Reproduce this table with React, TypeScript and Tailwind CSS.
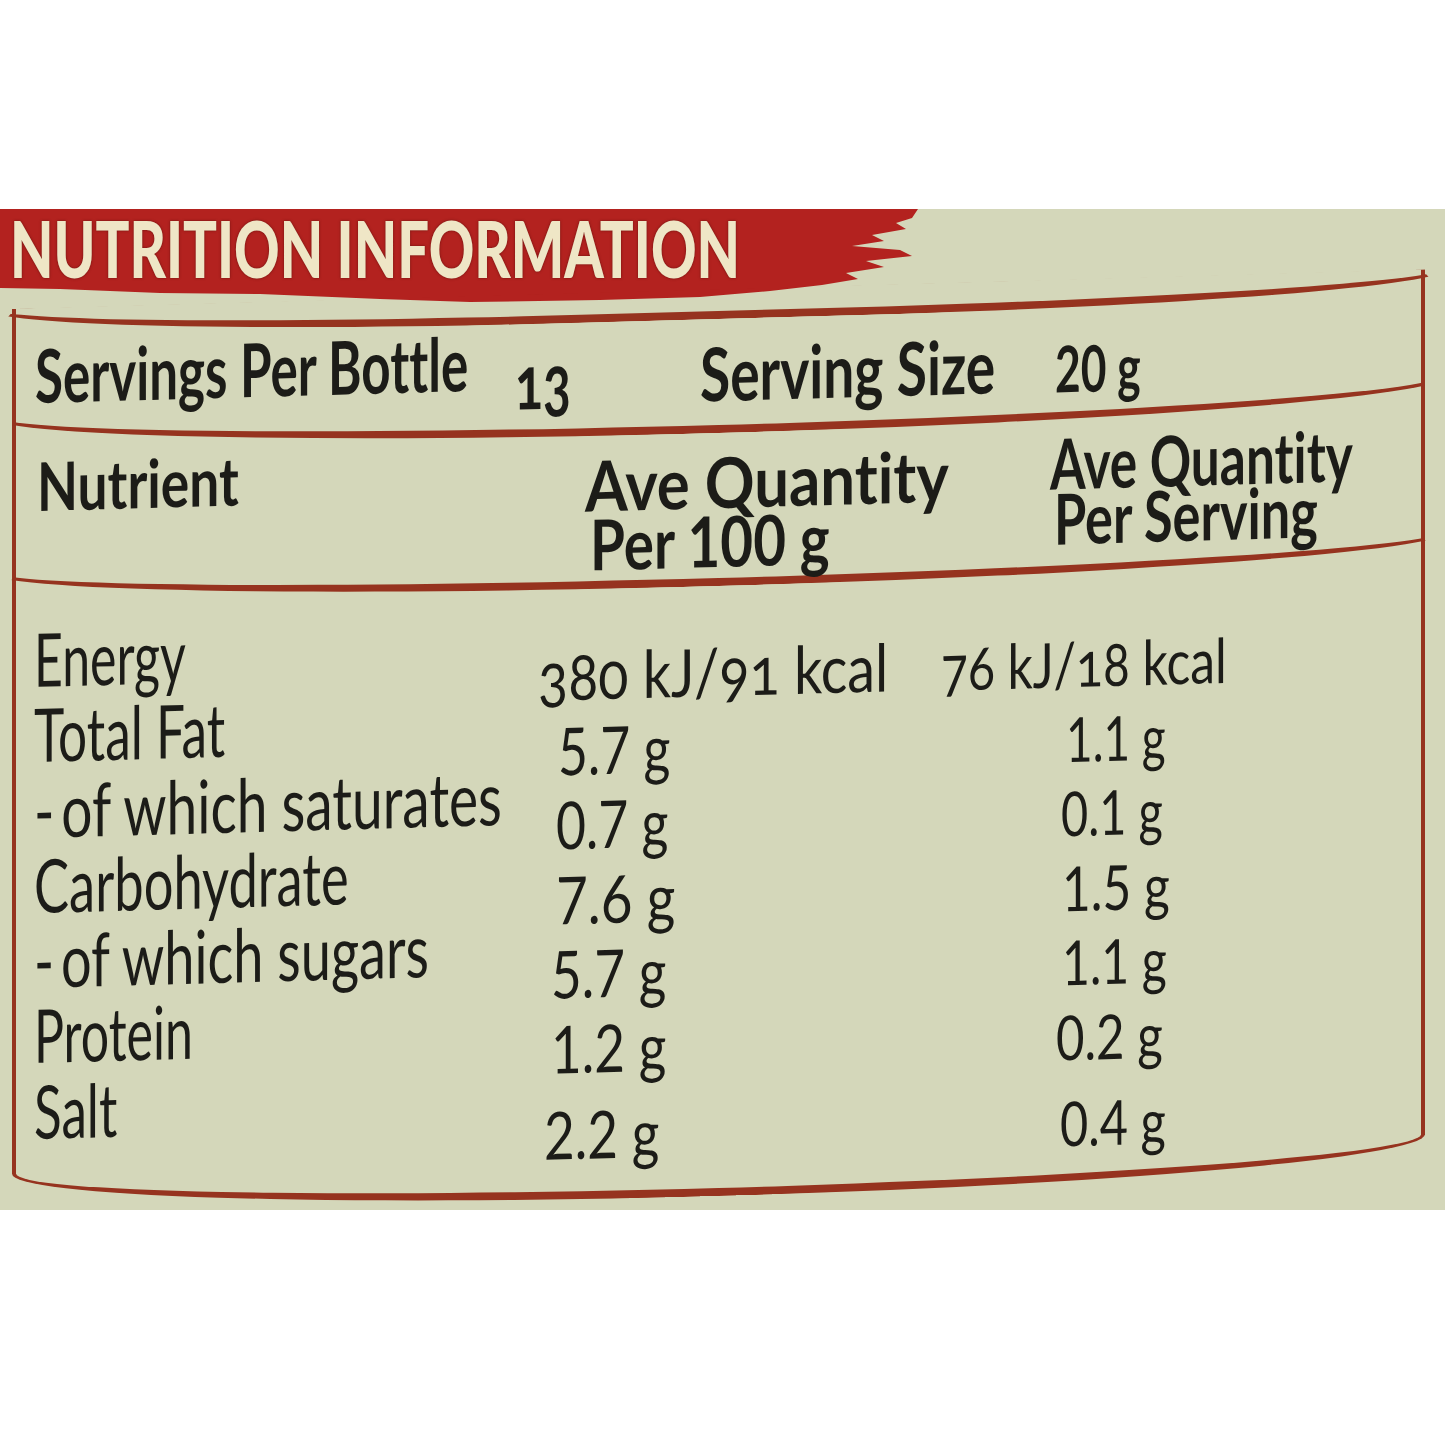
import { useLayoutEffect, useRef, useState, type ReactNode } from "react";

function Fit({ w, className = "", children }: { w: number; className?: string; children: ReactNode }) {
  const ref = useRef<HTMLSpanElement>(null);
  const [s, setS] = useState(1);
  useLayoutEffect(() => {
    const measure = () => {
      const el = ref.current;
      if (el && el.offsetWidth) setS(w / el.offsetWidth);
    };
    measure();
    if (document.fonts) document.fonts.ready.then(measure);
  }, [w]);
  return (
    <span
      ref={ref}
      className={`block w-max whitespace-nowrap origin-left ${className}`}
      style={{ transform: `scaleX(${s})` }}
    >
      {children}
    </span>
  );
}

const labels: [string, number][] = [
  ["Energy", 152],
  ["Total Fat", 191],
  ["-\u2009of which saturates", 468],
  ["Carbohydrate", 315],
  ["-\u2009of which sugars", 395],
  ["Protein", 159],
  ["Salt", 83],
];

const per100: [string, number, string][] = [
  ["380 kJ/91 kcal", 350, "ml-[-17px] oldstyle-nums"],
  ["5.7 g", 112, "ml-[3px]"],
  ["0.7 g", 112, "ml-[1px]"],
  ["7.6 g", 119, "ml-[1px]"],
  ["5.7 g", 115, "ml-[-4px]"],
  ["1.2 g", 115, "ml-[-4px]"],
  ["2.2 g", 115, "ml-[-11px] mt-[12px]"],
];

const perServing: [string, number, string][] = [
  ["76 kJ/18 kcal", 286, "ml-[-121px] oldstyle-nums"],
  ["1.1 g", 100, "ml-[4px]"],
  ["0.1 g", 102, "ml-[-1px]"],
  ["1.5 g", 108, "ml-[0px]"],
  ["1.1 g", 105, "ml-[0px]"],
  ["0.2 g", 107, "ml-[-6px]"],
  ["0.4 g", 106, "ml-[-2px] mt-[12px]"],
];

function Banner() {
  return (
    <div className="h-[84px] flex items-start">
      <div className="h-[93px] w-[920px] shrink-0 bg-[#b3221f] pl-[10px] text-[#efe6c6] font-black text-[78px] leading-[78px] [text-shadow:0_0_3px_rgba(70,10,5,0.7)] [clip-path:polygon(0_0,918px_0,912px_9px,896px_14px,906px_20px,872px_26px,884px_32px,852px_37px,900px_41px,912px_47px,866px_52px,884px_58px,846px_64px,858px_70px,822px_76px,770px_82px,700px_88px,600px_91px,470px_93px,380px_90px,260px_85px,160px_84px,60px_80px,0_79px)]">
        <Fit w={730}>NUTRITION INFORMATION</Fit>
      </div>
    </div>
  );
}

export default function App() {
  return (
    <div className="w-[1445px] h-[1445px] overflow-hidden bg-white font-[Lato,'Open_Sans',sans-serif] text-[#1c1c18] [font-variant-ligatures:none] [font-feature-settings:'liga'_0,'clig'_0,'dlig'_0]">
      <div className="h-[209px]" />
      <section className="h-[1001px] bg-[#d4d7ba] flex flex-col">
        <Banner />
        <div className="-mt-1 ml-[12px] w-[1413px] h-[907px] shrink-0 flex flex-col border-x-4 border-b-[8px] border-[#96331f] rounded-b-[50%_42px] skew-y-[-1.6deg]">
          {/* top rule */}
          <div className="h-[30px] shrink-0 -mx-[27px] border-x-[7px] border-x-transparent border-b-[8px] border-b-[#96331f] rounded-b-[50%_37px]" />

          {/* servings row */}
          <div className="h-[114px] shrink-0 -mx-[27px] border-x-[7px] border-x-transparent border-b-[8px] border-b-[#96331f] rounded-b-[50%_37px] grid grid-cols-[480px_185px_355px_1fr] items-start pl-[39px] font-bold">
            <div className="mt-0 text-[74px] leading-[74px]">
              <Fit w={433}>Servings Per Bottle</Fit>
            </div>
            <div className="mt-[20px] text-[74px] leading-[74px] oldstyle-nums">
              <Fit w={56}>13</Fit>
            </div>
            <div className="mt-[17px] text-[74px] leading-[74px]">
              <Fit w={295}>Serving Size</Fit>
            </div>
            <div className="mt-[27px] text-[64px] leading-[64px]">
              <Fit w={86}>20 g</Fit>
            </div>
          </div>

          {/* header row */}
          <div className="h-[153px] shrink-0 -mx-[27px] border-x-[7px] border-x-transparent border-b-[8px] border-b-[#96331f] rounded-b-[50%_34px] grid grid-cols-[548px_465px_1fr] items-start pl-[41px] font-bold">
            <div className="mt-0 text-[67px] leading-[67px]">
              <Fit w={202}>Nutrient</Fit>
            </div>
            <div className="mt-[19px] text-[70px] leading-[59px]">
              <Fit w={364}>Ave Quantity</Fit>
              <Fit w={240} className="ml-[5px]">Per 100 g</Fit>
            </div>
            <div className="mt-[12px] text-[70px] leading-[55px]">
              <Fit w={303}>Ave Quantity</Fit>
              <Fit w={264} className="ml-[4px]">Per Serving</Fit>
            </div>
          </div>

          {/* body */}
          <div className="flex-1 grid grid-cols-[521px_507px_1fr] items-start pl-[18px] font-normal">
            <div className="flex flex-col pt-[16px] text-[74px] leading-[75.3px]">
              {labels.map(([t, w]) => (
                <Fit key={t} w={w}>
                  {t}
                </Fit>
              ))}
            </div>
            <div className="flex flex-col pt-[48px] text-[66px] leading-[74.5px]">
              {per100.map(([t, w, c], i) => (
                <Fit key={i} w={w} className={c}>
                  {t}
                </Fit>
              ))}
            </div>
            <div className="flex flex-col pt-[50px] text-[62px] leading-[74.5px]">
              {perServing.map(([t, w, c], i) => (
                <Fit key={i} w={w} className={c}>
                  {t}
                </Fit>
              ))}
            </div>
          </div>
        </div>
      </section>
    </div>
  );
}
